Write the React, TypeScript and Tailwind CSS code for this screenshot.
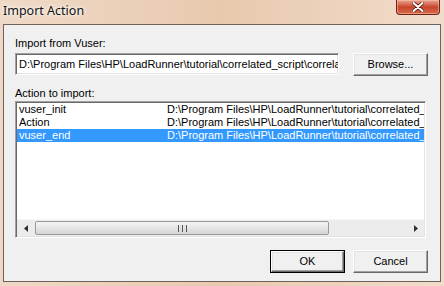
const sunken =
  "border border-t-[#a0a0a0] border-l-[#a0a0a0] border-b-white border-r-white shadow-[inset_1px_1px_0_#696969,inset_-1px_-1px_0_#e3e3e3]";
const raised =
  "border border-t-white border-l-white border-b-[#696969] border-r-[#696969] shadow-[inset_-1px_-1px_0_#a0a0a0,inset_1px_1px_0_#e3e3e3]";

const basePath = "D:\\Program Files\\HP\\LoadRunner\\tutorial\\correlated_script\\";

const actions = [
  { name: "vuser_init", file: basePath + "vuser_init.c" },
  { name: "Action", file: basePath + "Action.c" },
  { name: "vuser_end", file: basePath + "vuser_end.c" },
];

function Button({ label, isDefault }: { label: string; isDefault?: boolean }) {
  if (isDefault) {
    return (
      <div className="w-[75px] h-[23px] border border-black">
        <div className={`w-full h-full bg-[#f0f0f0] ${raised} flex items-center justify-center`}>
          {label}
        </div>
      </div>
    );
  }
  return (
    <div className={`w-[75px] h-[23px] bg-[#f0f0f0] ${raised} flex items-center justify-center`}>
      {label}
    </div>
  );
}

function ScrollBar() {
  return (
    <div className="h-[17px] flex bg-[#ececec] border-t border-[#f7f7f7]">
      <div className="w-[17px] flex items-center justify-center">
        <svg width="4" height="7" viewBox="0 0 4 7">
          <path d="M4 0 L0 3.5 L4 7 Z" fill="#303030" />
        </svg>
      </div>
      <div className="w-[294px] ml-[1px] my-[1px] rounded-[2px] border border-[#9a9a9a] bg-gradient-to-b from-[#f4f4f4] via-[#e6e6e6] to-[#d4d4d4] flex items-center justify-center">
        <div className="flex gap-[1px] h-[7px]">
          <div className="w-[1px] bg-[#555]" />
          <div className="w-[1px] bg-[#ddd]" />
          <div className="w-[1px] bg-[#555]" />
          <div className="w-[1px] bg-[#ddd]" />
          <div className="w-[1px] bg-[#555]" />
        </div>
      </div>
      <div className="flex-1" />
      <div className="w-[17px] flex items-center justify-center">
        <svg width="4" height="7" viewBox="0 0 4 7">
          <path d="M0 0 L4 3.5 L0 7 Z" fill="#303030" />
        </svg>
      </div>
    </div>
  );
}

export default function App() {
  return (
    <div className="w-[444px] h-[286px] flex flex-col bg-gradient-to-r from-[#efd9c6] via-[#e8c9ae] to-[#f1dccb] text-black font-['Liberation_Sans',Arial,sans-serif] overflow-hidden">
      {/* title bar */}
      <div className="h-[24px] flex items-start justify-between">
        <div className="pl-[3px] pt-[2px] text-[12.5px] font-['Noto_Sans','Open_Sans',sans-serif] text-[#111] [text-shadow:0_0_6px_#fff,0_0_3px_#fff]">
          Import Action
        </div>
        <div className="mr-[4px] w-[44px] h-[15px] rounded-b-[4px] border border-t-0 border-[#6e2418] bg-gradient-to-b from-[#e9a593] via-[#c9452c] to-[#d66a4c] flex items-center justify-center shadow-[inset_0_0_0_1px_rgba(255,200,180,0.5)]">
          <svg width="12" height="10" viewBox="0 0 12 10">
            <path d="M1.5 1 L10.5 9 M10.5 1 L1.5 9" stroke="#5a1a10" strokeWidth="3.6" strokeLinecap="round" />
            <path d="M1.5 1 L10.5 9 M10.5 1 L1.5 9" stroke="#ffffff" strokeWidth="2" strokeLinecap="round" />
          </svg>
        </div>
      </div>

      {/* client area */}
      <div className="flex-1 mx-[3px] mb-[4px] border border-[#6f625a] bg-[#f0f0f0] text-[11px] leading-[13px] pl-[11px] pt-[12px]">
        <div>Import from Vuser:</div>
        <div className="flex items-start mt-[3px]">
          <div className={`w-[324px] h-[22px] bg-white ${sunken} flex items-center pl-[3px] overflow-hidden whitespace-nowrap`}>
            D:\Program Files\HP\LoadRunner\tutorial\correlated_script\correlated_script.usr
          </div>
          <div className="ml-[14px]">
            <Button label="Browse..." />
          </div>
        </div>

        <div className="mt-[11px]">Action to import:</div>
        <div className={`mt-[1px] w-[411px] h-[137px] bg-white ${sunken} p-[1px] flex flex-col`}>
          <div className="flex-1 flex flex-col overflow-hidden">
            {actions.map((a, i) => {
              const sel = i === 2;
              return (
                <div
                  key={a.name}
                  className={`h-[13px] flex whitespace-nowrap overflow-hidden ${sel ? "bg-[#3399ff] text-white" : ""}`}
                >
                  <div className="w-[150px] pl-[2px]">{a.name}</div>
                  <div className="flex-1 overflow-hidden">{a.file}</div>
                </div>
              );
            })}
          </div>
          <ScrollBar />
        </div>

        <div className="flex mt-[12px] pl-[255px] gap-[8px]">
          <Button label="OK" isDefault />
          <Button label="Cancel" />
        </div>
      </div>
    </div>
  );
}
